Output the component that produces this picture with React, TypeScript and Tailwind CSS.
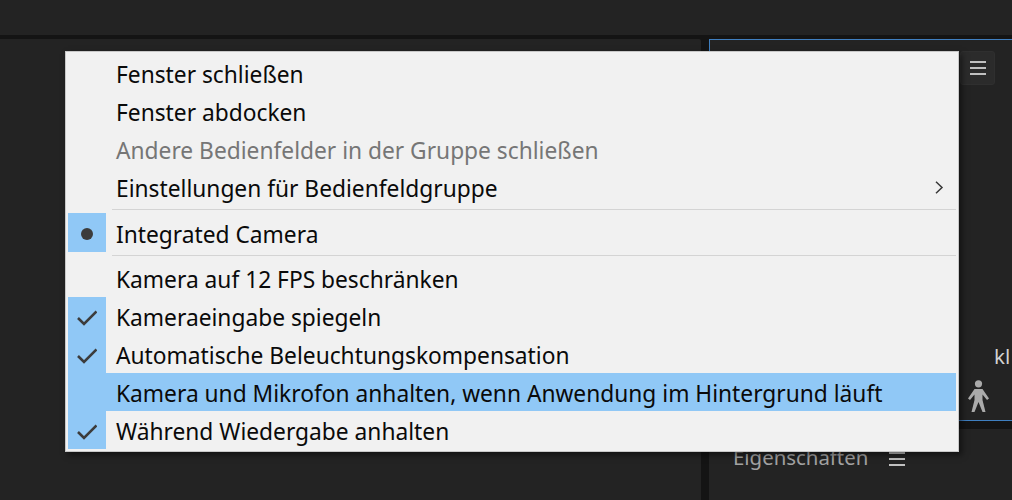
import React from "react";

const Check = () => (
  <svg className="translate-y-[2px]" width="20" height="16" viewBox="0 0 20 16" fill="none">
    <path d="M1 8 L7 14 L19.5 1.5" stroke="#3c3c3c" strokeWidth="2.6" />
  </svg>
);

const Row = ({ label, mark, disabled, active, chevron, tall, low }: { label: string; mark?: "check" | "dot" | "blank"; disabled?: boolean; active?: boolean; chevron?: boolean; tall?: boolean; low?: boolean }) => (
  <div className={`flex items-center ${tall ? "h-[39px]" : "h-[38px]"} ${active ? "bg-[#90c8f6]" : ""}`}>
    <div className={`flex h-full w-[38px] shrink-0 items-center justify-center ${mark ? "bg-[#90c8f6]" : ""}`}>
      {mark === "check" && <Check />}
      {mark === "dot" && <div className="h-3 w-3 translate-y-[1px] rounded-full bg-[#3c3c3c]" />}
    </div>
    <div className={`ml-[10px] flex-1 whitespace-nowrap text-[22.75px] leading-[38px] ${low ? "translate-y-[2px]" : ""} ${disabled ? "text-[#767676]" : "text-[#0a0a0a]"}`}>{label}</div>
    {chevron && (
      <svg className="mr-[12px] -translate-y-[1px]" width="10" height="14" viewBox="0 0 10 14" fill="none">
        <path d="M2 0.8 L8 6.5 L2 12.2" stroke="#383838" strokeWidth="1.5" />
      </svg>
    )}
  </div>
);

const Sep = () => <div className="ml-[44px] h-[1px] bg-[#d4d4d4]" />;

const Bars = () => (
  <div className="flex w-[16px] flex-col gap-[4px]">
    <div className="h-[2px] bg-[#c0c0c0]" />
    <div className="h-[2px] bg-[#c0c0c0]" />
    <div className="h-[2px] bg-[#c0c0c0]" />
  </div>
);

export default function App() {
  return (
    <div className="relative flex h-[500px] w-[1012px] flex-col overflow-hidden bg-[#141414] font-['Noto_Sans','Open_Sans',sans-serif]">
      <div className="h-[35px] shrink-0 bg-[#232323]" />
      <div className="mt-[4px] flex flex-1 gap-[8px]">
        <div className="w-[701px] rounded-tr-[2px] bg-[#232323]" />
        <div className="flex flex-1 flex-col gap-[8px]">
          <div className="relative h-[382px] border border-r-0 border-[#3f7fc0] bg-[#232323]">
            <div className="absolute left-[250px] top-[11px] flex h-[34px] w-[35px] items-center justify-center rounded-[3px] border border-[#2f2f2f] bg-[#2b2b2b]">
              <Bars />
            </div>
            <div className="absolute left-[284px] top-[302px] text-[20.5px] leading-[28px] text-[#d2d2d2]">kl</div>
            <svg className="absolute left-[258px] top-[340px]" width="21" height="32" viewBox="0 0 21 32" fill="#aaaaaa">
              <circle cx="10.5" cy="3.8" r="3.6" />
              <path d="M6.5 9 H14.5 L21 18.5 L19 20 L14.5 14.5 V20 L17.5 32 H14.5 L10.5 22 L6.5 32 H3.5 L6.5 20 V14.5 L2 20 L0 18.5 Z" />
            </svg>
          </div>
          <div className="flex flex-1 items-start gap-[21px] bg-[#232323] pl-[24px] pt-[14px]">
            <span className="text-[20.4px] leading-[28px] text-[#a2a2a2]">Eigenschaften</span>
            <div className="mt-[9px]">
              <Bars />
            </div>
          </div>
        </div>
      </div>

      <div className="absolute left-[65px] top-[51px] h-[401px] w-[894px] border border-[#c8c8c8] bg-[#f1f1f1] px-[2px] pb-[2px] pt-[4px] shadow-[3px_3px_6px_rgba(0,0,0,0.5)]">
        <Row label="Fenster schließen" />
        <Row label="Fenster abdocken" />
        <Row label="Andere Bedienfelder in der Gruppe schließen" disabled />
        <Row label="Einstellungen für Bedienfeldgruppe" chevron />
        <div className="mt-[1px]"><Sep /></div>
        <div className="mt-[3px]"><Row label="Integrated Camera" mark="dot" tall low /></div>
        <div className="mt-[3px]"><Sep /></div>
        <div className="mt-[3px]"><Row label="Kamera auf 12 FPS beschränken" low /></div>
        <Row label="Kameraeingabe spiegeln" mark="check" low />
        <Row label="Automatische Beleuchtungskompensation" mark="check" low />
        <Row label="Kamera und Mikrofon anhalten, wenn Anwendung im Hintergrund läuft" mark="blank" active low />
        <Row label="Während Wiedergabe anhalten" mark="check" low />
      </div>
    </div>
  );
}
